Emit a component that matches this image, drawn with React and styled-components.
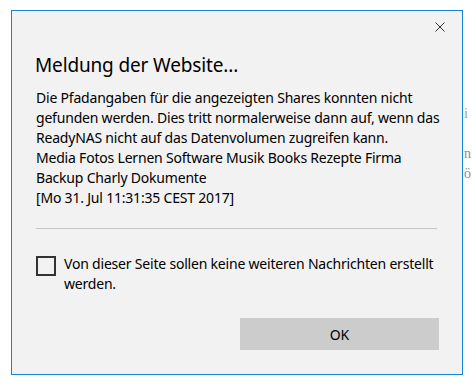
import styled, { createGlobalStyle } from "styled-components";

const GlobalStyle = createGlobalStyle`
    html, body {
        margin: 0;
        padding: 0;
        background: #ffffff;
    }
    body {
        font-family: "Noto Sans", "Open Sans", sans-serif;
    }
`;

const Page = styled.div`
    display: flex;
    align-items: flex-start;
    width: 472px;
    height: 389px;
    overflow: hidden;
    padding: 10px 0 0 11px;
    box-sizing: border-box;
`;

const Dialog = styled.div`
    flex-shrink: 0;
    width: 452px;
    height: 365px;
    box-sizing: border-box;
    border: 1px solid #1883d7;
    background: #f2f2f2;
    display: flex;
    flex-direction: column;
    padding: 0 23px 0 24px;
    color: #000;
`;

const Header = styled.div`
    display: flex;
    justify-content: flex-end;
    padding-top: 6px;
    margin-right: -11px;
`;

const CloseButton = styled.button`
    width: 20px;
    height: 20px;
    padding: 0;
    border: none;
    background: none;
    display: flex;
    align-items: center;
    justify-content: center;
    cursor: pointer;

    svg {
        width: 10px;
        height: 10px;
    }
`;

const Title = styled.h1`
    margin: 14px 0 0 -1px;
    font-size: 19px;
    line-height: 28px;
    letter-spacing: -0.15px;
    font-weight: 400;
    color: #000;
`;

const Message = styled.p`
    margin: 9px 0 0;
    font-size: 14px;
    line-height: 20px;
    letter-spacing: -0.2px;
    white-space: nowrap;
    color: #000;
`;

const Divider = styled.hr`
    margin: 20px 0 0;
    border: none;
    height: 1px;
    background: #c6c6c6;
    width: 401px;
`;

const CheckRow = styled.label`
    display: flex;
    align-items: flex-start;
    gap: 8px;
    margin-top: 25px;
    font-size: 14px;
    line-height: 20px;
    letter-spacing: -0.2px;
`;

const CheckBox = styled.span`
    flex-shrink: 0;
    width: 20px;
    height: 20px;
    margin-top: 2px;
    box-sizing: border-box;
    border: 2px solid #333333;
`;

const Footer = styled.div`
    display: flex;
    justify-content: flex-end;
    margin-top: 24px;
`;

const OkButton = styled.button`
    width: 199px;
    height: 32px;
    border: none;
    background: #cccccc;
    font-family: inherit;
    font-size: 14px;
    color: #000;
    cursor: pointer;
`;

const Backdrop = styled.div`
    width: 9px;
    overflow: hidden;
    padding: 94px 0 0 1px;
    font-family: "Liberation Serif", serif;
    font-size: 14px;
    line-height: 20px;
    white-space: nowrap;
`;

const BackdropLine = styled.div`
    color: ${(p) => (p.$link ? "#7fa7cf" : "#8a8a8a")};
`;

const CloseIcon = () => (
    <svg viewBox="0 0 10 10" fill="none" stroke="#333" strokeWidth="1">
        <path d="M0.5 0.5l9 9M9.5 0.5l-9 9" />
    </svg>
);

const messageLines = [
    "Die Pfadangaben für die angezeigten Shares konnten nicht",
    "gefunden werden. Dies tritt normalerweise dann auf, wenn das",
    "ReadyNAS nicht auf das Datenvolumen zugreifen kann.",
    "Media Fotos Lernen Software Musik Books Rezepte Firma",
    "Backup Charly Dokumente",
    "[Mo 31. Jul 11:31:35 CEST 2017]",
];

export default function App() {
    return (
        <>
            <GlobalStyle />
            <Page>
                <Dialog>
                    <Header>
                        <CloseButton aria-label="Schließen">
                            <CloseIcon />
                        </CloseButton>
                    </Header>
                    <Title>Meldung der Website...</Title>
                    <Message>
                        {messageLines.map((line, i) => (
                            <span key={i}>
                                {line}
                                {i < messageLines.length - 1 && <br />}
                            </span>
                        ))}
                    </Message>
                    <Divider />
                    <CheckRow>
                        <CheckBox />
                        <span>Von dieser Seite sollen keine weiteren Nachrichten erstellt werden.</span>
                    </CheckRow>
                    <Footer>
                        <OkButton>OK</OkButton>
                    </Footer>
                </Dialog>
                <Backdrop aria-hidden="true">
                    <BackdropLine $link>i ]</BackdropLine>
                    <BackdropLine>&nbsp;</BackdropLine>
                    <BackdropLine>n</BackdropLine>
                    <BackdropLine>ö</BackdropLine>
                </Backdrop>
            </Page>
        </>
    );
}
